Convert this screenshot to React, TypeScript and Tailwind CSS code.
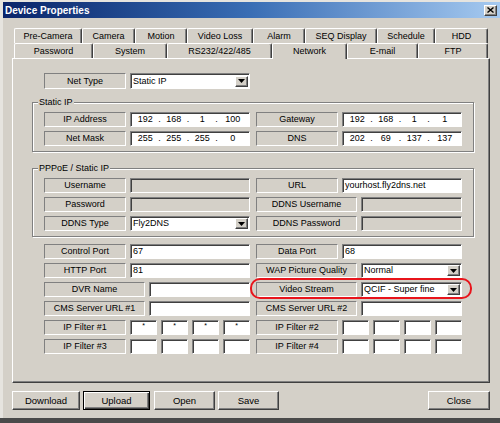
import type { ReactNode } from 'react';

const row1 = [
  { label: 'Pre-Camera', w: 'w-[68px]' },
  { label: 'Camera', w: 'w-[53px]' },
  { label: 'Motion', w: 'w-[52px]' },
  { label: 'Video Loss', w: 'w-[66px]' },
  { label: 'Alarm', w: 'w-[52px]' },
  { label: 'SEQ Display', w: 'w-[72px]' },
  { label: 'Schedule', w: 'w-[58px]' },
  { label: 'HDD', w: 'w-[53px]' },
];

const row2 = [
  { label: 'Password', w: 'w-[79px]' },
  { label: 'System', w: 'w-[74px]' },
  { label: 'RS232/422/485', w: 'w-[105px]' },
  { label: 'Network', w: 'w-[75px]', active: true },
  { label: 'E-mail', w: 'w-[71px]' },
  { label: 'FTP', w: 'w-[70px]' },
];

const sunken =
  'border border-t-[#808080] border-l-[#808080] border-r-white border-b-white shadow-[inset_1px_1px_0_#404040]';
const raised =
  'border border-t-white border-l-white border-r-[#404040] border-b-[#404040] shadow-[inset_-1px_-1px_0_#808080]';

function Label({ children, wide }: { children: ReactNode; wide?: boolean }) {
  return (
    <div
      className={`${wide ? 'w-[101px]' : 'w-[82px]'} h-[15px] shrink-0 flex items-center justify-center border border-t-[#808080] border-l-[#808080] border-r-white border-b-white`}
    >
      {children}
    </div>
  );
}

function Field({ children, disabled }: { children?: ReactNode; disabled?: boolean }) {
  return (
    <div
      className={`flex-1 h-[15px] flex items-center pl-[2px] ${sunken} ${disabled ? 'bg-[#d4d0c8]' : 'bg-white'}`}
    >
      {children}
    </div>
  );
}

function Select({ value, tall }: { value: string; tall?: boolean }) {
  return (
    <div className={`flex-1 ${tall ? 'h-[16px]' : 'h-[15px]'} flex items-center bg-white pl-[2px] pr-[1px] ${sunken}`}>
      <span className="flex-1">{value}</span>
      <span className={`w-[13px] h-[11px] bg-[#d4d0c8] flex items-center justify-center ${raised}`}>
        <svg width="7" height="4" viewBox="0 0 7 4">
          <path d="M0 0h7L3.5 4z" fill="#000" />
        </svg>
      </span>
    </div>
  );
}

function IpField({ parts }: { parts: string[] }) {
  return (
    <div className={`flex-1 h-[15px] flex items-center bg-white px-[2px] ${sunken}`}>
      {parts.map((p, i) => (
        <div key={i} className="flex flex-1 items-center">
          <span className="flex-1 text-center">{p}</span>
          {i < 3 && <span className="w-[4px] text-center">.</span>}
        </div>
      ))}
    </div>
  );
}

function FilterBoxes({ star }: { star?: boolean }) {
  return (
    <div className="flex-1 flex gap-[4px]">
      {[0, 1, 2, 3].map((i) => (
        <div key={i} className={`flex-1 h-[15px] bg-white flex justify-center text-[7px] leading-[9px] ${sunken}`}>
          {star ? '*' : ''}
        </div>
      ))}
    </div>
  );
}

function Half({ children }: { children: ReactNode }) {
  return <div className="w-[206px] flex gap-[4px]">{children}</div>;
}

function Row({ children }: { children: ReactNode }) {
  return <div className="flex gap-[6px]">{children}</div>;
}

function Group({ title, h, children }: { title: string; h: string; children: ReactNode }) {
  return (
    <div
      className={`relative w-[442px] ${h} border border-[#808080] shadow-[inset_1px_1px_0_#fff,1px_1px_0_#fff] pt-[9px] pl-[11px] flex flex-col gap-[4px]`}
    >
      <span className="absolute -top-[6px] left-[5px] px-[1px] bg-[#d4d0c8] leading-[11px]">{title}</span>
      {children}
    </div>
  );
}

function Button({ children, w, primary }: { children: ReactNode; w: string; primary?: boolean }) {
  return (
    <div
      className={`${w} h-[19px] flex items-center justify-center ${
        primary
          ? 'border border-black shadow-[inset_1px_1px_0_#fff,inset_-1px_-1px_0_#404040,inset_-2px_-2px_0_#808080]'
          : raised
      }`}
    >
      {children}
    </div>
  );
}

export default function App() {
  return (
    <div className="relative w-[500px] h-[423px] overflow-hidden bg-[#d4d0c8] text-black text-[9px] leading-[11px] font-['Liberation_Sans',Arial,sans-serif] flex flex-col shadow-[inset_3px_2px_0_#e6e4df]">
      {/* Title bar */}
      <div className="mt-[2px] ml-[3px] h-[16px] bg-linear-to-r from-[#0a246a] via-[#3a6eb5] to-[#a6caf0] flex items-center justify-between pl-[2px] pr-[3px]">
        <span className="text-white font-bold text-[10px]">Device Properties</span>
        <span className={`w-[13px] h-[11px] bg-[#d4d0c8] flex items-center justify-center ${raised}`}>
          <svg width="7" height="6" viewBox="0 0 7 6">
            <path d="M0.5 0.5l6 5M6.5 0.5l-6 5" stroke="#000" strokeWidth="1.4" />
          </svg>
        </span>
      </div>

      {/* Tabs */}
      <div className="mt-[10px] ml-[14px] flex h-[15px]">
        {row1.map((t) => (
          <div
            key={t.label}
            className={`${t.w} flex items-center justify-center rounded-t-[2px] border-t border-l border-r border-b-0 border-t-white border-l-white border-r-[#404040] shadow-[inset_-1px_0_0_#808080]`}
          >
            {t.label}
          </div>
        ))}
      </div>
      <div className="ml-[14px] flex h-[15px] items-start">
        {row2.map((t) => (
          <div
            key={t.label}
            className={`${t.w} flex items-center justify-center rounded-t-[2px] border-t border-l border-r border-b-0 border-t-white border-l-white border-r-[#404040] shadow-[inset_-1px_0_0_#808080] bg-[#d4d0c8] ${
              t.active ? 'relative z-10 h-[16px]' : 'h-[15px]'
            }`}
          >
            {t.label}
          </div>
        ))}
      </div>

      {/* Panel */}
      <div
        className={`ml-[12px] w-[478px] h-[325px] shrink-0 pt-[14px] pl-[19px] flex flex-col ${raised}`}
      >
        <div className="ml-[12px] flex gap-[4px] w-[206px] h-[16px]">
          <div className="w-[82px] h-[16px] shrink-0 flex items-center justify-center border border-t-[#808080] border-l-[#808080] border-r-white border-b-white">
            Net Type
          </div>
          <Select value="Static IP" tall />
        </div>

        <div className="mt-[13px]">
          <Group title="Static IP" h="h-[50px]">
            <Row>
              <Half>
                <Label>IP Address</Label>
                <IpField parts={['192', '168', '1', '100']} />
              </Half>
              <Half>
                <Label>Gateway</Label>
                <IpField parts={['192', '168', '1', '1']} />
              </Half>
            </Row>
            <Row>
              <Half>
                <Label>Net Mask</Label>
                <IpField parts={['255', '255', '255', '0']} />
              </Half>
              <Half>
                <Label>DNS</Label>
                <IpField parts={['202', '69', '137', '137']} />
              </Half>
            </Row>
          </Group>
        </div>

        <div className="mt-[16px]">
          <Group title="PPPoE / Static IP" h="h-[69px]">
            <Row>
              <Half>
                <Label>Username</Label>
                <Field disabled />
              </Half>
              <Half>
                <Label>URL</Label>
                <Field>yourhost.fly2dns.net</Field>
              </Half>
            </Row>
            <Row>
              <Half>
                <Label>Password</Label>
                <Field disabled />
              </Half>
              <Half>
                <Label wide>DDNS Username</Label>
                <Field disabled />
              </Half>
            </Row>
            <Row>
              <Half>
                <Label>DDNS Type</Label>
                <Select value="Fly2DNS" />
              </Half>
              <Half>
                <Label wide>DDNS Password</Label>
                <Field disabled />
              </Half>
            </Row>
          </Group>
        </div>

        <div className="mt-[7px] ml-[12px] flex flex-col gap-[4px]">
          <Row>
            <Half>
              <Label>Control Port</Label>
              <Field>67</Field>
            </Half>
            <Half>
              <Label>Data Port</Label>
              <Field>68</Field>
            </Half>
          </Row>
          <Row>
            <Half>
              <Label>HTTP Port</Label>
              <Field>81</Field>
            </Half>
            <Half>
              <Label wide>WAP Picture Quality</Label>
              <Select value="Normal" />
            </Half>
          </Row>
          <Row>
            <Half>
              <Label wide>DVR Name</Label>
              <Field />
            </Half>
            <Half>
              <Label wide>Video Stream</Label>
              <Select value="QCIF - Super fine" />
            </Half>
          </Row>
          <Row>
            <Half>
              <Label wide>CMS Server URL #1</Label>
              <Field />
            </Half>
            <Half>
              <Label wide>CMS Server URL #2</Label>
              <Field />
            </Half>
          </Row>
          <Row>
            <Half>
              <Label>IP Filter #1</Label>
              <FilterBoxes star />
            </Half>
            <Half>
              <Label>IP Filter #2</Label>
              <FilterBoxes />
            </Half>
          </Row>
          <Row>
            <Half>
              <Label>IP Filter #3</Label>
              <FilterBoxes />
            </Half>
            <Half>
              <Label>IP Filter #4</Label>
              <FilterBoxes />
            </Half>
          </Row>
        </div>
      </div>

      {/* Buttons */}
      <div className="mt-[8px] ml-[12px] w-[478px] flex text-[9.5px]">
        <Button w="w-[68px]">Download</Button>
        <div className="ml-[3px]">
          <Button w="w-[67px]" primary>
            Upload
          </Button>
        </div>
        <div className="ml-[4px]">
          <Button w="w-[61px]">Open</Button>
        </div>
        <div className="ml-[3px]">
          <Button w="w-[61px]">Save</Button>
        </div>
        <div className="ml-auto">
          <Button w="w-[62px]">Close</Button>
        </div>
      </div>

      <div className="mt-[8px] h-[5px] bg-[#4a4a4a]" />

      {/* Red highlight around Video Stream */}
      <div className="absolute left-[250px] top-[278px] w-[222px] h-[21px] rounded-[10px] border-2 border-[#e8141b]" />
    </div>
  );
}
